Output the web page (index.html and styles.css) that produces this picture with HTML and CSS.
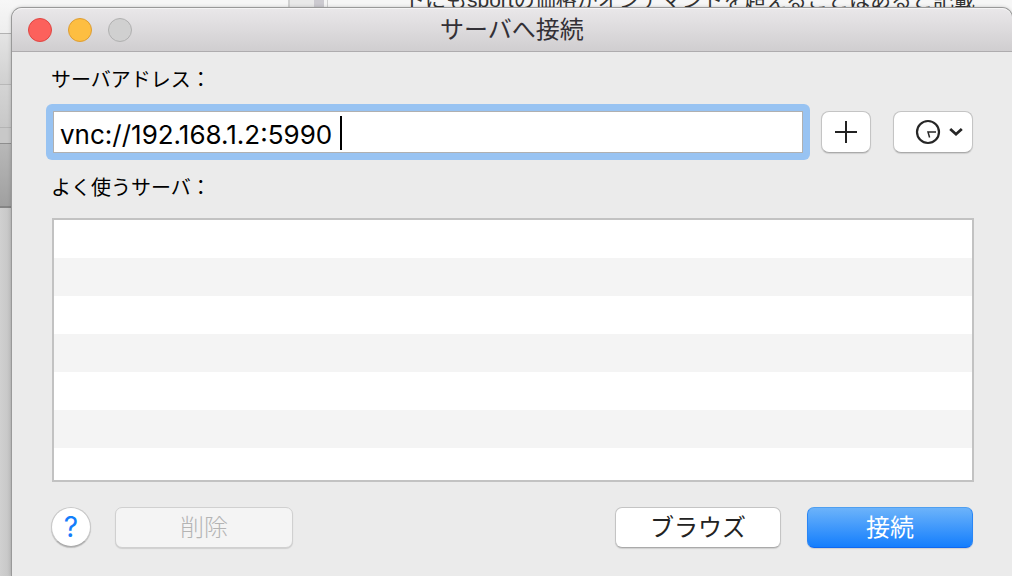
FILE: index.html
```html
<!DOCTYPE html>
<html lang="ja">
<head>
    <meta charset="UTF-8">
    <meta name="viewport" content="width=device-width, initial-scale=1.0">
    <title>サーバへ接続</title>
    <link rel="stylesheet" href="styles.css">
</head>
<body>

    <!-- windows behind the dialog -->
    <div class="backdrop">
        <div class="side">
            <div class="side-title"></div>
            <div class="side-tools"></div>
            <div class="side-row"></div>
            <div class="side-gap"></div>
            <div class="side-tabs"></div>
        </div>
        <div class="scrollbar"></div>
        <p class="article">トにもsportの価格がオンデマンドを超えることはあると記載</p>
    </div>

    <main class="window">
        <header class="titlebar">
            <div class="lights">
                <button class="light close" aria-label="閉じる"></button>
                <button class="light minimize" aria-label="しまう"></button>
                <button class="light zoom" aria-label="拡大" disabled></button>
            </div>
            <h1>サーバへ接続</h1>
        </header>

        <form class="content" onsubmit="return false">
            <label for="address">サーバアドレス：</label>
            <div class="address-row">
                <div class="focus-ring">
                    <input type="text" id="address" value="vnc://192.168.1.2:5990" spellcheck="false">
                    <span class="caret"></span>
                </div>
                <button type="button" class="btn add" aria-label="追加">
                    <svg width="22" height="22" viewBox="0 0 22 22">
                        <path d="M11 0V22M0 11H22" stroke="#222" stroke-width="2"/>
                    </svg>
                </button>
                <button type="button" class="btn recent" aria-label="最近使ったサーバ">
                    <svg width="48" height="26" viewBox="0 0 48 26" fill="none" stroke="#262626">
                        <circle cx="13" cy="13" r="11" stroke-width="2.2"/>
                        <path d="M21 13H13L14.6 18.5" stroke-width="1.5"/>
                        <path d="M35.2 10L41 15.2L46.8 10" stroke-width="2.8"/>
                    </svg>
                </button>
            </div>

            <span class="label" id="favorites">よく使うサーバ：</span>
            <ul class="servers" aria-labelledby="favorites"></ul>

            <div class="actions">
                <button type="button" class="help" aria-label="ヘルプ">?</button>
                <button type="button" class="btn remove" disabled>削除</button>
                <button type="button" class="btn browse">ブラウズ</button>
                <button type="submit" class="btn connect">接続</button>
            </div>
        </form>
    </main>

</body>
</html>
```

FILE: styles.css
```css
* {
    box-sizing: border-box;
}

body {
    display: flex;
    flex-direction: column;
    min-height: 100vh;
    margin: 0;
    padding: 8px 0 0 12px;
    overflow: hidden;
    background-color: #f6f6f6;
    font-family: Inter, "Noto Sans CJK JP", sans-serif;
}

button, input {
    margin: 0;
    padding: 0;
    font-family: inherit;
}

/* background windows */
.backdrop {
    position: absolute;
    inset: 0;
    overflow: hidden;
}

.side {
    display: flex;
    flex-direction: column;
    width: 12px;
    height: 100%;
    background: linear-gradient(to right, #d0d0d0, #c4c4c4);
}

.side-title {
    height: 34px;
    background: linear-gradient(#f7f7f7, #eee);
    border-bottom: 1px solid #b2b2b2;
}

.side-tools {
    height: 51px;
    background: linear-gradient(#e4e4e4, #d0d0d0);
    border-bottom: 1px solid #b8b8b8;
}

.side-row {
    height: 43px;
    background: linear-gradient(#d4d4d4, #c8c8c8);
    border-bottom: 1px solid #b4b4b4;
}

.side-gap {
    height: 16px;
    background-color: #c8c8c8;
    border-bottom: 1px solid #8e8e8e;
}

.side-tabs {
    height: 64px;
    background: linear-gradient(#b8b8b8, #a0a0a0);
    border-bottom: 2px solid #858585;
}

.scrollbar {
    position: absolute;
    top: 0;
    left: 288px;
    width: 40px;
    height: 8px;
    background: linear-gradient(to right, #e9e9e9 24px, #cccad0 24px, #cccad0 34px, #f4f4f4 34px);
    border-left: 2px solid #d0d0d0;
    border-right: 1px solid #d0d0d0;
}

.article {
    position: absolute;
    top: -14px;
    left: 404px;
    margin: 0;
    font: 21px/28px "Liberation Sans", "Noto Sans CJK JP", sans-serif;
    color: #333;
    white-space: nowrap;
}

/* dialog */
.window {
    position: relative;
    flex: 1;
    background-color: #ebebeb;
    border-radius: 10px 10px 0 0;
    box-shadow: 0 0 0 1px #999, 0 0 4px rgba(0, 0, 0, 0.3);
}

.titlebar {
    display: flex;
    align-items: center;
    height: 44px;
    padding: 0 16px;
    background: linear-gradient(#e9e7e9, #d0ced0);
    border-top: 1px solid #f5f4f5;
    border-bottom: 1px solid #aeacae;
    border-radius: 10px 10px 0 0;
}

.titlebar h1 {
    flex: 1;
    margin: 0;
    padding-right: 104px;
    font-size: 24px;
    font-weight: normal;
    line-height: 40px;
    text-align: center;
    color: #333036;
}

.lights {
    display: flex;
    gap: 16px;
    width: 104px;
}

.light {
    width: 24px;
    height: 24px;
    border: 1px solid;
    border-radius: 50%;
}

.close {
    background-color: #fc615c;
    border-color: #df4643;
}

.minimize {
    background-color: #fdbe41;
    border-color: #dd9d34;
}

.zoom {
    background-color: #d0d0d0;
    border-color: #b0b0b0;
}

.content {
    padding: 14px 39px 28px;
}

label, .label {
    display: block;
    font-size: 20px;
    line-height: 28px;
    color: #000;
}

.address-row {
    display: flex;
    align-items: center;
    margin: 10px 0 14px -5px;
}

.focus-ring {
    position: relative;
    flex: 1;
    padding: 7px;
    background-color: #98c3f2;
    border-radius: 6px;
}

.focus-ring input {
    display: block;
    width: 100%;
    height: 42px;
    padding: 4px 6px 0;
    font-size: 26px;
    color: #000;
    background-color: #fff;
    border: 1px solid #b0b0b0;
    border-radius: 0;
    outline: none;
}

.caret {
    position: absolute;
    top: 12px;
    left: 294px;
    width: 2px;
    height: 34px;
    background-color: #000;
}

.btn {
    display: flex;
    align-items: center;
    justify-content: center;
    height: 42px;
    font-size: 24px;
    line-height: 36px;
    color: #222;
    background-color: #fff;
    border: 1px solid #c4c4c4;
    border-bottom-color: #aaa;
    border-radius: 8px;
    box-shadow: 0 1px 1px rgba(0, 0, 0, 0.12);
}

.add {
    width: 50px;
    margin-left: 11px;
}

.recent {
    width: 80px;
    margin-left: 22px;
    padding-left: 12px;
}

.servers {
    height: 264px;
    margin: 16px -1px 23px 1px;
    padding: 0;
    list-style: none;
    background: repeating-linear-gradient(#fff 0 38px, #f4f4f4 38px 76px);
    border: 2px solid #c2c2c2;
}

.actions {
    display: flex;
    align-items: center;
}

.actions .btn {
    height: 41px;
    width: 166px;
    margin-top: 2px;
    border-radius: 7px;
}

.help {
    width: 40px;
    height: 40px;
    font-size: 28px;
    line-height: 36px;
    color: #147efb;
    background-color: #fff;
    border: 1px solid #c8c8c8;
    border-bottom-color: #aaa;
    border-radius: 50%;
    box-shadow: 0 1px 1px rgba(0, 0, 0, 0.2);
}

.actions .remove {
    width: 178px;
    margin-left: 24px;
    margin-right: auto;
    font-weight: 300;
    color: #b4b4b4;
    background-color: #f4f4f4;
    border-color: #d0d0d0;
}

.actions .connect {
    margin-left: 26px;
    color: #fff;
    background: linear-gradient(#6cb3fa, #147efd);
    border-color: #4f9ff0 #2a86f5 #0f68f0;
}
```
